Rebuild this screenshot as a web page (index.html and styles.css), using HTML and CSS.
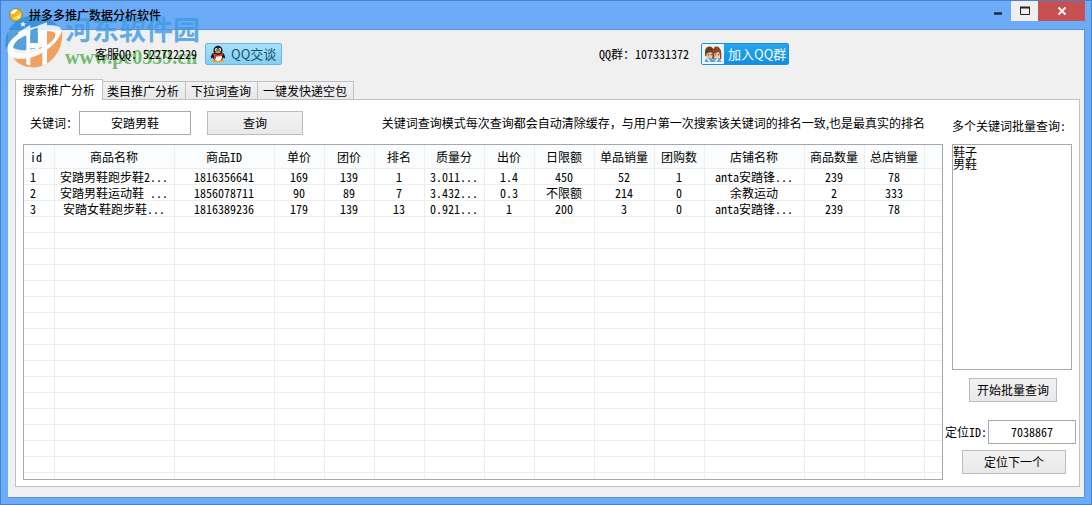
FILE: index.html
```html
<!DOCTYPE html>
<html lang="zh-CN">
<head>
<meta charset="utf-8">
<title>拼多多推广数据分析软件</title>
<link rel="stylesheet" href="styles.css">
</head>
<body>
<div class="window">
  <header class="titlebar">
    <svg class="app-icon" viewBox="0 0 14 14" aria-hidden="true">
      <circle cx="7" cy="7" r="6.4" fill="#f0b41c" stroke="#8b7a4a" stroke-width=".8"/>
      <path d="M1.500 5.500A6 6 0 0 1 8 1.200C8 4 5 6.500 1.500 5.500Z" fill="#fffbe6"/>
      <path d="M3 9.500C6 9.500 10 7 11.500 4C13 8 10 12.500 6 12Z" fill="#ffd84a"/>
      <circle cx="9.500" cy="9" r="1.600" fill="#fff3a8"/>
    </svg>
    <h1 class="title">拼多多推广数据分析软件</h1>
    <div class="controls">
      <button class="control minimize" aria-label="最小化"><svg viewBox="0 0 12 12"><path d="M2 8.500h8" stroke="#15263c" stroke-width="2.400"/></svg></button>
      <button class="control maximize" aria-label="最大化"><svg viewBox="0 0 12 12"><path d="M1.500 2.500h9v7h-9z" fill="none" stroke="#222"/><path d="M1 2.500h10" stroke="#222" stroke-width="2"/></svg></button>
      <button class="control close" aria-label="关闭"><svg viewBox="0 0 12 12"><path d="M2.500 2.500l7 7M9.500 2.500l-7 7" stroke="#fff" stroke-width="1.800"/></svg></button>
    </div>
  </header>

  <main class="client">
    <div class="contacts">
      <div class="contact service">
        <span class="number">客服QQ：522722229</span>
        <button class="qq-chat">
          <svg viewBox="0 0 18 18" aria-hidden="true">
            <ellipse cx="9" cy="15.800" rx="6" ry="1.700" fill="#f2a51f"/>
            <path d="M4.500 7C3 9 1.500 11 1.900 13.500L4 12.500ZM13.500 7C15 9 16.500 11 16.100 13.500L14 12.500Z" fill="#191919"/>
            <ellipse cx="9" cy="11.500" rx="5.400" ry="4.600" fill="#1b1b1b"/>
            <ellipse cx="9" cy="12.300" rx="3.900" ry="3.700" fill="#fff"/>
            <ellipse cx="9" cy="5.500" rx="4.500" ry="4.800" fill="#1b1b1b"/>
            <ellipse cx="7.300" cy="4.700" rx="1.300" ry="1.700" fill="#fff"/>
            <ellipse cx="10.700" cy="4.700" rx="1.300" ry="1.700" fill="#fff"/>
            <circle cx="7.700" cy="4.900" r=".6"/><circle cx="10.400" cy="4.900" r=".6"/>
            <ellipse cx="9" cy="7.300" rx="2.900" ry="1" fill="#f5a623"/>
            <path d="M4.200 8.500Q9 11.200 13.800 8.500L14.200 10Q9 13 3.900 10ZM5 10.500L7.200 11.200L6.800 14L4.900 13.500Z" fill="#e2362c"/>
          </svg>
          <span>QQ交谈</span>
        </button>
      </div>
      <div class="contact group">
        <span class="number">QQ群：107331372</span>
        <button class="qq-join">
          <svg viewBox="0 0 22 20" aria-hidden="true">
            <path d="M3 18Q3 13.500 7 13.500Q10 13.500 11.500 16Q12 13.500 15 13.500Q19 13.500 19 18Z" fill="#5aa9c9"/>
            <path d="M5 14.500L8 17.500M13.500 17.500L16 14.500" stroke="#fff" stroke-width="1.400"/>
            <ellipse cx="7.500" cy="10" rx="3.600" ry="4.300" fill="#eebd98"/>
            <path d="M3.200 12Q1.800 3 7 2.500Q11 2.200 11.500 6.500L11.300 9.500Q8.500 7.700 6.300 8.700L4.600 9.500L4.400 12.500Z" fill="#6f3c24"/>
            <ellipse cx="14.700" cy="10" rx="3.300" ry="4.200" fill="#f2c6a4"/>
            <path d="M10.300 15Q9.500 2.500 14.500 2.200Q20.200 2.500 19.300 15L17.600 15Q18.800 9.500 16.300 7.700Q14 9.300 12.300 9.500L12.300 15Z" fill="#8a4a28"/>
            <path d="M6 10.700h1M8.700 10.700h1M13.300 10.700h1M16 10.700h1" stroke="#40251a" stroke-width="1.100"/>
          </svg>
          <span>加入QQ群</span>
        </button>
      </div>
    </div>

    <div class="tabs" role="tablist">
      <button class="tab active" role="tab" aria-selected="true">搜索推广分析</button>
      <button class="tab" role="tab" aria-selected="false">类目推广分析</button>
      <button class="tab" role="tab" aria-selected="false">下拉词查询</button>
      <button class="tab" role="tab" aria-selected="false">一键发快递空包</button>
    </div>

    <section class="panel" role="tabpanel">
      <div class="results">
        <form class="search">
          <label for="keyword">关键词：</label>
          <input id="keyword" class="field keyword" type="text" value="安踏男鞋">
          <button class="button query" type="button">查询</button>
          <p class="hint">关键词查询模式每次查询都会自动清除缓存，与用户第一次搜索该关键词的排名一致,也是最真实的排名</p>
        </form>
        <div class="grid-frame">
          <table class="grid">
            <colgroup>
              <col class="w31"><col class="w120"><col class="w100"><col class="w50"><col class="w50"><col class="w50"><col class="w60"><col class="w50"><col class="w60"><col class="w60"><col class="w50"><col class="w100"><col class="w60"><col class="w60"><col>
            </colgroup>
            <thead>
              <tr><th>id</th><th>商品名称</th><th>商品ID</th><th>单价</th><th>团价</th><th>排名</th><th>质量分</th><th>出价</th><th>日限额</th><th>单品销量</th><th>团购数</th><th>店铺名称</th><th>商品数量</th><th>总店销量</th><th></th></tr>
            </thead>
            <tbody id="rows">
              <tr><td>1</td><td>安踏男鞋跑步鞋2...</td><td>1816356641</td><td>169</td><td>139</td><td>1</td><td>3.011...</td><td>1.4</td><td>450</td><td>52</td><td>1</td><td>anta安踏锋...</td><td>239</td><td>78</td><td></td></tr>
              <tr><td>2</td><td>安踏男鞋运动鞋 ...</td><td>1856078711</td><td>90</td><td>89</td><td>7</td><td>3.432...</td><td>0.3</td><td>不限额</td><td>214</td><td>0</td><td>余教运动</td><td>2</td><td>333</td><td></td></tr>
              <tr><td>3</td><td>安踏女鞋跑步鞋...</td><td>1816389236</td><td>179</td><td>139</td><td>13</td><td>0.921...</td><td>1</td><td>200</td><td>3</td><td>0</td><td>anta安踏锋...</td><td>239</td><td>78</td><td></td></tr>
            </tbody>
          </table>
        </div>
      </div>

      <aside class="batch">
        <label for="batch-words">多个关键词批量查询:</label>
        <textarea id="batch-words" class="words" spellcheck="false">鞋子
男鞋</textarea>
        <button class="button start" type="button">开始批量查询</button>
        <div class="locate">
          <label for="locate-id">定位ID:</label>
          <input id="locate-id" class="field" type="text" value="7038867">
        </div>
        <button class="button next" type="button">定位下一个</button>
      </aside>
    </section>
  </main>

  <div class="watermark" aria-hidden="true">
    <svg viewBox="10 14 174 168">
      <path d="M14 128C2 80 30 30 85 22C120 17 150 30 166 50C120 48 60 62 32 92C20 106 14 116 14 128Z" fill="#2f8fd6"/>
      <path d="M34 118C30 92 70 66 130 62L150 90C120 124 60 134 34 118Z" fill="#2f8fd6"/>
      <path d="M181 68C188 130 140 182 88 177C66 176 46 165 36 150C80 160 150 136 181 68Z" fill="#ee8e3e"/>
      <path d="M112 62C140 58 162 62 162 76C160 98 136 116 112 128Z" fill="#ee8e3e"/>
      <path d="M18 130C12 92 72 54 130 51C158 50 178 54 180 66C168 120 92 156 40 147C28 144 20 140 18 130ZM34 122C36 142 82 138 122 118C148 104 164 88 162 76C158 58 34 72 34 122Z" fill="#fff" fill-rule="evenodd"/>
      <path d="M50 72L86 50V172L74 168V80L50 90ZM86 104H110V120H86Z" fill="#fff"/>
      <path d="M108 52L136 42V166L122 172V116L108 120Z" fill="#fff"/>
      <path d="M86 66L108 58V104H86Z" fill="#2f8fd6"/>
      <path d="M64 39l3 5.500l6 .8l-4.300 4.200l1.100 6l-5.800-2.900l-5.300 3l1-6.200l-4.500-4.200l6-.8z" fill="#fff"/>
    </svg>
    <div class="watermark-text">
      <span class="site-name">河东软件园</span>
      <span class="site-url">www.pc0359.cn</span>
    </div>
  </div>
</div>
<script src="script.js"></script>
</body>
</html>
```

FILE: styles.css
```css
* { box-sizing: border-box; }

body {
  margin: 0;
  color: #000;
  background: #6babf7;
  font: 12px/16px "Noto Sans CJK SC", sans-serif;
  font-feature-settings: "hwid";
}

button, input, textarea {
  margin: 0;
  color: inherit;
  font: inherit;
  font-feature-settings: inherit;
}

.window {
  position: relative;
  display: flex;
  flex-direction: column;
  min-height: 100vh;
  padding: 0 6px 6px 7px;
  background: #6babf7;
  border: 1px solid #4682c8;
}

.titlebar {
  display: flex;
  align-items: center;
  height: 28px;
  padding-left: 1px;
}

.app-icon { width: 14px; height: 14px; }

.title {
  z-index: 2;
  flex: 1;
  margin: 0 0 0 6px;
  font-size: 12px;
  font-weight: 500;
}

.controls { display: flex; align-self: flex-start; }

.control {
  display: grid;
  place-items: center;
  width: 27px;
  height: 20px;
  padding: 0;
  background: none;
  border: 0;
}

.control svg { width: 12px; height: 12px; }
.control.maximize { background: #efefef; }
.control.close { width: 47px; background: #c75050; }

.client {
  display: flex;
  flex: 1;
  flex-direction: column;
  padding: 13px 4px 10px 7px;
  background: #f0f0f0;
  border: 1px solid #5b93d3;
  border-width: 1px 1px 1px 0;
}

.contacts {
  display: flex;
  align-items: center;
  padding: 0 0 0 80px;
}

.contact { display: flex; align-items: center; }
.service { gap: 8px; flex: 0 1 504px; }
.group { gap: 12px; }
.number { z-index: 2; }

.qq-chat, .qq-join {
  display: flex;
  align-items: center;
  height: 22px;
  padding: 0;
  font-size: 13px;
  font-feature-settings: normal;
}

.qq-chat {
  gap: 4px;
  width: 77px;
  padding-left: 3px;
  color: #17506f;
  background: linear-gradient(#a8e0fa, #85cef3);
  border: 1px solid #62b9e2;
  border-radius: 2px;
}

.qq-chat svg { width: 18px; height: 18px; }

.qq-join {
  width: 88px;
  gap: 4px;
  color: #fff;
  background: linear-gradient(#25a7ef, #118fde);
  border: 1px solid #1b91d9;
  border-radius: 2px;
}

.qq-join svg { width: 22px; height: 20px; background: #e9f7ff; }

.tabs {
  display: flex;
  align-items: flex-end;
  margin-top: 14px;
}

.tab {
  height: 18px;
  padding: 0 6px 0 5px;
  white-space: nowrap;
  line-height: 16px;
  background: linear-gradient(#f2f2f2, #e8e8e8);
  border: 1px solid #bfc0c2;
  border-width: 1px 1px 0 0;
}

.tab.active {
  z-index: 1;
  height: 21px;
  margin: 0 -1px -1px 0;
  padding: 0 7px;
  background: #fff;
  border-width: 1px 1px 0;
}

.panel {
  display: flex;
  flex: 1;
  gap: 1px;
  padding: 11px 3px 6px 7px;
  background: #fff;
  border: 1px solid #bfc0c2;
}

.results {
  display: flex;
  flex: 1;
  flex-direction: column;
  gap: 9px;
  min-width: 0;
}

.search {
  display: flex;
  align-items: center;
  padding-left: 7px;
  white-space: nowrap;
}

.field {
  height: 24px;
  padding: 0 0 2px;
  text-align: center;
  background: #fff;
  border: 1px solid #a5a8ae;
}

.keyword { width: 112px; margin: 0 16px 0 1px; }

.button {
  height: 24px;
  padding: 0;
  background: linear-gradient(#f2f2f2, #e9e9e9);
  border: 1px solid #bcbcbc;
}

.query { width: 96px; }
.hint { margin: 0 18px 0 auto; font-feature-settings: normal; }

.grid-frame {
  flex: 1 1 0;
  min-height: 320px;
  overflow: hidden;
  border: 1px solid #a5a8ae;
}

.grid {
  width: 100%;
  table-layout: fixed;
  border-spacing: 0;
}

.w31 { width: 31px; }
.w50 { width: 50px; }
.w60 { width: 60px; }
.w100 { width: 100px; }
.w120 { width: 120px; }

.grid th, .grid td {
  padding: 0 1px 0 0;
  overflow: hidden;
  text-align: center;
  white-space: nowrap;
  font-weight: 400;
  border: 0 solid #ebeeef;
  border-width: 0 1px 1px 0;
}

.grid th { height: 24px; background: #fafcfd; }
.grid td { height: 16px; line-height: 15px; }
.grid th:last-child, .grid td:last-child { border-right: 0; }
.grid th:first-child { padding-right: 6px; }
.grid td:first-child { padding-left: 6px; text-align: left; }

.batch {
  display: flex;
  flex-direction: column;
  align-items: flex-start;
  width: 132px;
  padding: 7px 0 6px;
}

.batch > label { margin-left: 8px; }

.words {
  flex: 1;
  width: 120px;
  margin: 10px 0 8px 8px;
  padding: 1px 0;
  line-height: 12px;
  resize: none;
  background: #fff;
  border: 1px solid #a5a8ae;
}

.start { width: 88px; margin: 0 0 18px 25px; }
.next { width: 104px; margin: 6px 0 0 18px; }

.locate { display: flex; align-items: center; align-self: stretch; padding-left: 1px; }
.locate label { flex: none; width: 43px; }
.locate .field { flex: 1; min-width: 0; }

.watermark {
  position: absolute;
  z-index: 1;
  top: 12px;
  left: 4px;
  display: flex;
  gap: 2px;
  pointer-events: none;
  opacity: .8;
}

.watermark svg { width: 58px; height: 56px; }

.watermark-text { display: flex; flex-direction: column; }

.site-name {
  color: #3f9be3;
  font-size: 27px;
  font-weight: 700;
  line-height: 32px;
}

.site-url {
  margin-top: 2px;
  color: #52ae4f;
  font: bold 20px/20px "Liberation Serif", serif;
}
```

FILE: script.js
```js
// Fill the rest of the list with blank rows so the grid lines reach the bottom.
const rows = document.getElementById("rows");
const frame = document.querySelector(".grid-frame");
const columns = rows.rows[0].cells.length;
while (frame.scrollHeight <= frame.clientHeight) {
  const row = rows.insertRow();
  for (let i = 0; i < columns; i++) row.insertCell();
}
```
